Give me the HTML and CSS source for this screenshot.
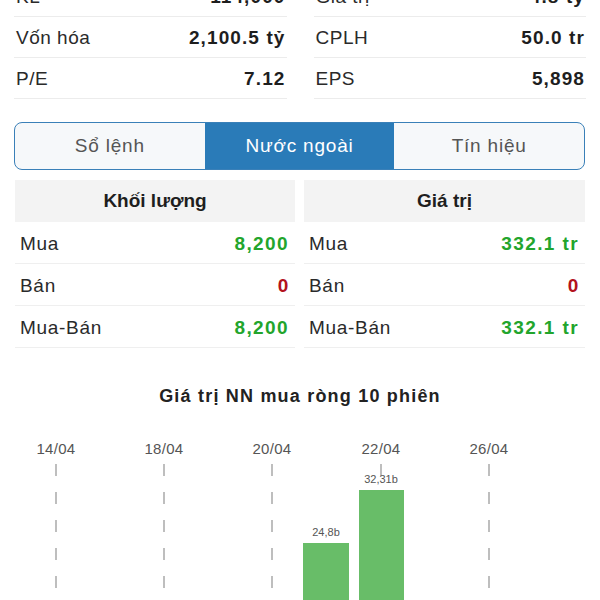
FILE: index.html
```html
<!DOCTYPE html>
<html lang="vi">
<head>
<meta charset="utf-8">
<link rel="stylesheet" href="styles.css">
</head>
<body>
<div class="stats">
  <div class="col">
    <div class="row"><span class="lbl">KL</span><span class="val">114,000</span></div>
    <div class="row"><span class="lbl">Vốn hóa</span><span class="val">2,100.5 tỷ</span></div>
    <div class="row"><span class="lbl">P/E</span><span class="val">7.12</span></div>
  </div>
  <div class="col">
    <div class="row"><span class="lbl">Giá trị</span><span class="val">4.8 tỷ</span></div>
    <div class="row"><span class="lbl">CPLH</span><span class="val">50.0 tr</span></div>
    <div class="row"><span class="lbl">EPS</span><span class="val">5,898</span></div>
  </div>
</div>

<div class="tabs">
  <div class="tab">Sổ lệnh</div>
  <div class="tab active">Nước ngoài</div>
  <div class="tab">Tín hiệu</div>
</div>

<div class="tables">
  <div class="tbl">
    <div class="thead">Khối lượng</div>
    <div class="trow"><span>Mua</span><span class="up">8,200</span></div>
    <div class="trow"><span>Bán</span><span class="down">0</span></div>
    <div class="trow"><span>Mua-Bán</span><span class="up">8,200</span></div>
  </div>
  <div class="tbl">
    <div class="thead">Giá trị</div>
    <div class="trow"><span>Mua</span><span class="up">332.1 tr</span></div>
    <div class="trow"><span>Bán</span><span class="down">0</span></div>
    <div class="trow"><span>Mua-Bán</span><span class="up">332.1 tr</span></div>
  </div>
</div>

<h2 class="chart-title">Giá trị NN mua ròng 10 phiên</h2>

<svg class="chart" width="600" height="182" viewBox="0 0 600 182">
  <g class="grid">
    <line x1="56" y1="42" x2="56" y2="182"/>
    <line x1="164" y1="42" x2="164" y2="182"/>
    <line x1="272" y1="42" x2="272" y2="182"/>
    <line x1="381" y1="42" x2="381" y2="182"/>
    <line x1="489" y1="42" x2="489" y2="182"/>
  </g>
  <g class="xlab">
    <text x="56" y="32">14/04</text>
    <text x="164" y="32">18/04</text>
    <text x="272" y="32">20/04</text>
    <text x="381" y="32">22/04</text>
    <text x="489" y="32">26/04</text>
  </g>
  <rect class="bar" x="303" y="121" width="46" height="61"/>
  <rect class="bar" x="359" y="68" width="45" height="114"/>
  <g class="blab">
    <text x="326" y="114">24,8b</text>
    <text x="381" y="61">32,31b</text>
  </g>
</svg>
</body>
</html>
```

FILE: styles.css
```css
html, body {
  margin: 0;
  padding: 0;
  background: #fff;
}
body {
  width: 600px;
  height: 600px;
  overflow: hidden;
  font-family: "Liberation Sans", Arial, sans-serif;
  color: #222;
}
.stats {
  display: grid;
  grid-template-columns: 1fr 1fr;
  column-gap: 27px;
  padding: 0 14px;
  margin-top: -24px;
}
.row {
  display: flex;
  justify-content: space-between;
  align-items: center;
  height: 38px;
  padding: 2px 2px 0;
  border-bottom: 1px solid #ececec;
  font-size: 19px;
}
.lbl { color: #2a2a2a; letter-spacing: 0.5px; }
.val { font-weight: bold; color: #1e1e1e; letter-spacing: 1.1px; margin-right: -1px; }

.tabs {
  display: grid;
  grid-template-columns: 1fr 1fr 1fr;
  margin: 23px 15px 0 14px;
  height: 46px;
  border: 1.5px solid #3a80b8;
  border-radius: 8px;
  overflow: hidden;
  background: #f6f8fa;
}
.tab {
  display: flex;
  align-items: center;
  justify-content: center;
  font-size: 19px;
  letter-spacing: 0.8px;
  color: #555;
}
.tab.active {
  background: #2a7bb8;
  color: #fff;
}

.tables {
  display: grid;
  grid-template-columns: 280px 281px;
  column-gap: 9px;
  margin: 10px 0 0 15px;
}
.thead {
  height: 42px;
  background: #f3f3f3;
  display: flex;
  align-items: center;
  justify-content: center;
  font-size: 19px;
  font-weight: bold;
  color: #1e1e1e;
}
.trow {
  display: flex;
  justify-content: space-between;
  align-items: center;
  height: 38px;
  border-bottom: 1px solid #efefef;
  padding: 3px 7px 0 5px;
  font-size: 19px;
  letter-spacing: 0.7px;
  color: #2a2a2a;
}
.trow .up { color: #22a52c; font-weight: bold; letter-spacing: 1.4px; margin-right: -1px; }
.trow .down { color: #b3121c; font-weight: bold; margin-right: -1px; }

.chart-title {
  margin: 36px 0 0;
  text-align: center;
  font-size: 18px;
  font-weight: bold;
  letter-spacing: 1.2px;
  color: #222;
  line-height: 24px;
}
.chart {
  display: block;
  margin-top: 14px;
}
.grid line {
  stroke: #a9a9a9;
  stroke-width: 1.5;
  stroke-dasharray: 12 16;
}
.xlab text {
  font-family: "Liberation Sans", Arial, sans-serif;
  font-size: 15px;
  letter-spacing: 0.3px;
  fill: #555;
  text-anchor: middle;
}
.bar { fill: #68bd68; }
.blab text {
  font-family: "Liberation Sans", Arial, sans-serif;
  font-size: 11px;
  fill: #555;
  text-anchor: middle;
}
```
